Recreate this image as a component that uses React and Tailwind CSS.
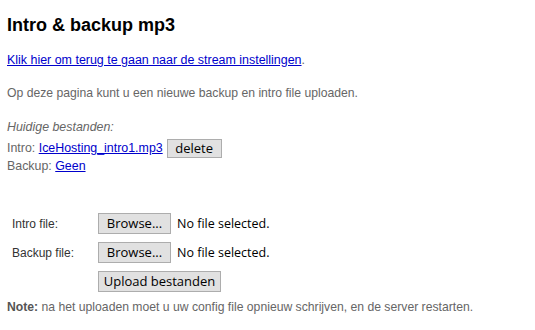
export default function App() {
  const btn =
    "bg-[#e1e1e1] border border-[#adadad] text-black text-[13px] leading-none font-['Open_Sans','DejaVu_Sans',sans-serif]";
  return (
    <div className="w-[535px] h-[330px] bg-white pl-[7px] pt-[15px] font-['Liberation_Sans',Arial,sans-serif] text-[#666] text-[12.4px] leading-[16px]">
      <h1 className="text-[18px] leading-[21px] font-bold text-black">Intro &amp; backup mp3</h1>
      <p className="mt-[16px]">
        <a href="#" className="text-[#0000cc] underline text-[12.45px]">
          Klik hier om terug te gaan naar de stream instellingen
        </a>
        .
      </p>
      <p className="mt-[17px] text-[12.2px]">Op deze pagina kunt u een nieuwe backup en intro file uploaden.</p>
      <p className="mt-[18px] italic">Huidige bestanden:</p>
      <div className="mt-[3px] flex items-center h-[20px]">
        <span>Intro:&nbsp;</span>
        <a href="#" className="text-[#0000cc] underline">IceHosting_intro1.mp3</a>
        <button className={`${btn} ml-[4px] w-[55px] h-[19px]`}>delete</button>
      </div>
      <div className="h-[16px]">
        Backup:{" "}
        <a href="#" className="text-[#0000cc] underline">Geen</a>
      </div>
      <div className="mt-[39px] flex flex-col gap-[8px]">
        <div className="flex items-center h-[21px]">
          <span className="w-[91px] pl-[5px] text-[12px] text-[#333]">Intro file:</span>
          <button className={`${btn} w-[73px] h-[21px]`}>Browse...</button>
          <span className="ml-[6px] text-[12.5px] text-black font-['Open_Sans','DejaVu_Sans',sans-serif]">No file selected.</span>
        </div>
        <div className="flex items-center h-[21px]">
          <span className="w-[91px] pl-[5px] text-[12px] text-[#333]">Backup file:</span>
          <button className={`${btn} w-[73px] h-[21px]`}>Browse...</button>
          <span className="ml-[6px] text-[12.5px] text-black font-['Open_Sans','DejaVu_Sans',sans-serif]">No file selected.</span>
        </div>
        <div className="flex items-center h-[21px]">
          <span className="w-[91px]"></span>
          <button className={`${btn} w-[123px] h-[21px]`}>Upload bestanden</button>
        </div>
      </div>
      <p className="mt-[7px] text-[12.2px] text-[#666]">
        <b className="text-[#555]">Note:</b> na het uploaden moet u uw config file opnieuw schrijven, en de server restarten.
      </p>
    </div>
  );
}
